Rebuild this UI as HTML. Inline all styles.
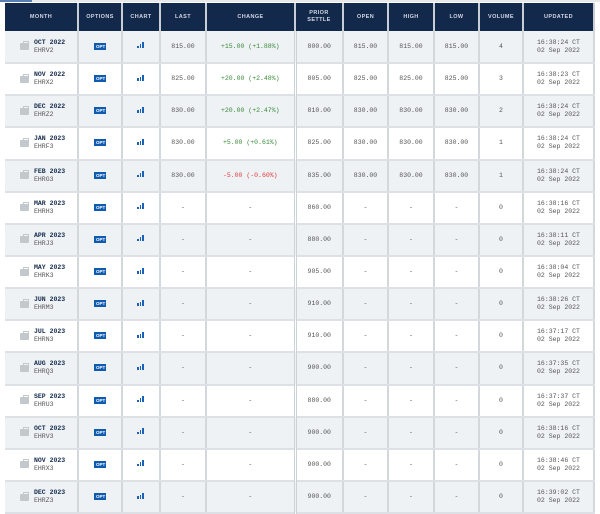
<!DOCTYPE html>
<html><head><style>
*{margin:0;padding:0;box-sizing:border-box}
body{width:600px;height:499px;overflow:hidden;background:#fff;position:relative;font-family:"Liberation Mono",monospace}
.top{position:absolute;left:0;top:0;width:600px;height:2px;background:#e6e8ea}
.top i{position:absolute;left:0;top:0;width:32px;height:2px;background:#5a7fb0}
table{position:absolute;left:5px;top:3px;width:589px;border-collapse:collapse;table-layout:fixed}
th{background:#13294b;color:#cfd6e2;font-family:"Liberation Sans",sans-serif;font-size:5.5px;font-weight:bold;letter-spacing:.4px;height:28px;border-right:2px solid #c9ced4;text-align:center;line-height:7px}
td{height:32.15px;border-right:2px solid #d3d8dc;border-bottom:2px solid #dde1e5;font-size:6.5px;color:#555;text-align:center;line-height:8px}
tr.o td{background:#eef2f5}
tr.e td{background:#ffffff}
td.m{text-align:left;padding-left:15px;color:#13294b;font-weight:bold;white-space:nowrap}
td.m span{display:inline-block;vertical-align:middle}
td.m small{font-weight:normal;color:#555;font-size:6.5px}
.bag{display:inline-block;width:9px;height:7px;background:#c3c8cc;border-radius:1px;margin-right:5px;vertical-align:middle;position:relative}
.bag:before{content:"";position:absolute;left:2.5px;top:-2px;width:4px;height:2px;border:1px solid #c3c8cc;border-bottom:none}
.opt{display:inline-block;background:#0f5bb0;color:#fff;font-family:"Liberation Sans",sans-serif;font-size:4.5px;font-weight:bold;padding:1px 2px;width:12px;height:7px;line-height:5px}
.ch{display:inline-block;width:8px;height:6px;position:relative}
.ch b{position:absolute;bottom:0;width:1.6px;background:#1a62b8}
.g{color:#3a8a3a}.r{color:#e23b3b}
td.sep{border-right:3px double #cdd2d7}
</style></head><body>
<div class="top"><i></i></div>
<table>
<colgroup><col style="width:73px"><col style="width:44px"><col style="width:38px"><col style="width:46px"><col style="width:89px"><col style="width:48px"><col style="width:45px"><col style="width:46px"><col style="width:45px"><col style="width:44px"><col style="width:71px"></colgroup>
<thead><tr><th>MONTH</th><th>OPTIONS</th><th>CHART</th><th>LAST</th><th>CHANGE</th><th>PRIOR<br>SETTLE</th><th>OPEN</th><th>HIGH</th><th>LOW</th><th>VOLUME</th><th>UPDATED</th></tr></thead>
<tbody id="b"></tbody>
</table>
<script>
var d=[["OCT 2022","EHRV2","815.00","+15.00 (+1.88%)","800.00","815.00","4","16:38:24"],
["NOV 2022","EHRX2","825.00","+20.00 (+2.48%)","805.00","825.00","3","16:38:23"],
["DEC 2022","EHRZ2","830.00","+20.00 (+2.47%)","810.00","830.00","2","16:38:24"],
["JAN 2023","EHRF3","830.00","+5.00 (+0.61%)","825.00","830.00","1","16:38:24"],
["FEB 2023","EHRG3","830.00","-5.00 (-0.60%)","835.00","830.00","1","16:38:24"],
["MAR 2023","EHRH3","-","-","860.00","-","0","16:38:16"],
["APR 2023","EHRJ3","-","-","880.00","-","0","16:38:11"],
["MAY 2023","EHRK3","-","-","905.00","-","0","16:38:04"],
["JUN 2023","EHRM3","-","-","910.00","-","0","16:38:26"],
["JUL 2023","EHRN3","-","-","910.00","-","0","16:37:17"],
["AUG 2023","EHRQ3","-","-","900.00","-","0","16:37:35"],
["SEP 2023","EHRU3","-","-","880.00","-","0","16:37:37"],
["OCT 2023","EHRV3","-","-","900.00","-","0","16:38:16"],
["NOV 2023","EHRX3","-","-","900.00","-","0","16:38:46"],
["DEC 2023","EHRZ3","-","-","900.00","-","0","16:39:02"]];
var h="";d.forEach(function(r,i){var c=r[3][0]=="+"?"g":(r[3][0]=="-"&&r[3].length>1?"r":"");
h+='<tr class="'+(i%2?'e':'o')+'"><td class="m"><span class="bag"></span><span>'+r[0]+'<br><small>'+r[1]+'</small></span></td><td><span class="opt">OPT</span></td><td><span class="ch"><b style="left:0;height:2.5px"></b><b style="left:2.6px;height:4px"></b><b style="left:5.2px;height:6px"></b></span></td><td>'+r[2]+'</td><td class="sep '+c+'">'+r[3]+'</td><td>'+r[4]+'</td><td>'+r[5]+'</td><td>'+r[5]+'</td><td>'+r[5]+'</td><td>'+r[6]+'</td><td>'+r[7]+' CT<br>02 Sep 2022</td></tr>';});
document.getElementById("b").innerHTML=h;
</script>
</body></html>
